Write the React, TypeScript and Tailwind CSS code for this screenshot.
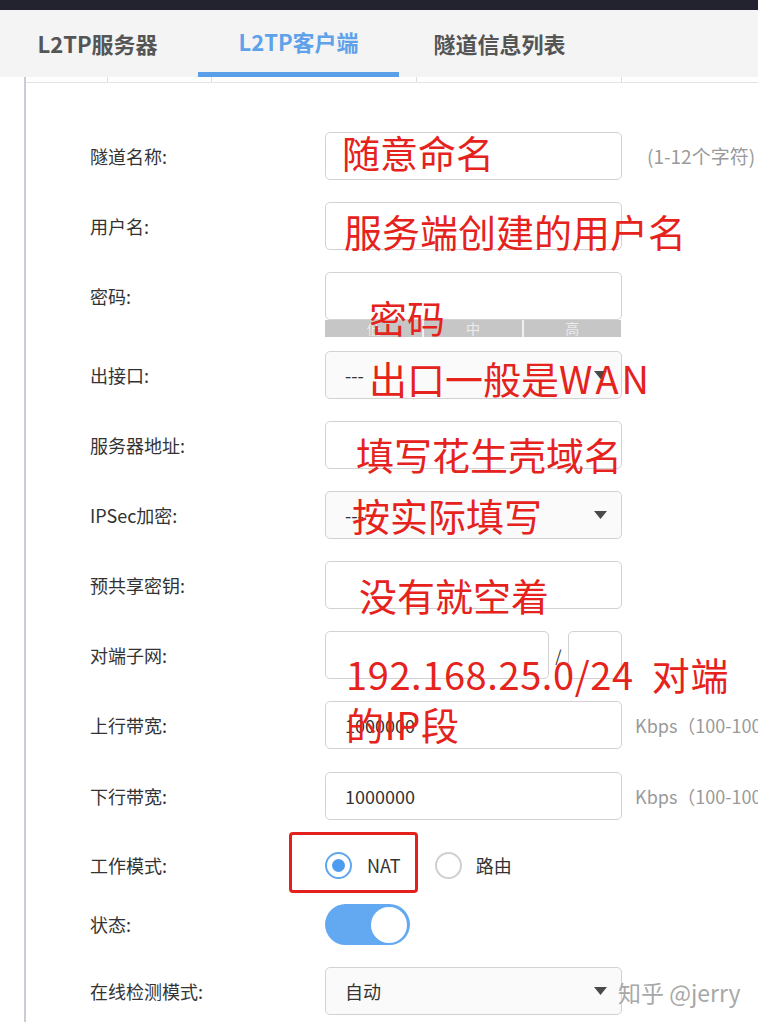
import React from 'react';

const font = { fontFamily: '"Noto Sans CJK SC", "Noto Sans", sans-serif' };

function Caret() {
  return (
    <svg width="13" height="8" viewBox="0 0 13 8" className="shrink-0">
      <path d="M0 0 L13 0 L6.5 8 Z" fill="#4a4a4a" />
    </svg>
  );
}

function TextBox({ value, width = 'w-[297px]' }: { value?: string; width?: string }) {
  return (
    <div className={`${width} h-[48px] border border-[#d2d2d2] rounded-[5px] bg-white flex items-center px-[19px] text-[18px] text-[#333]`}>
      {value}
    </div>
  );
}

function SelectBox({ value }: { value: string }) {
  return (
    <div className="w-[297px] h-[48px] border border-[#d2d2d2] rounded-[5px] bg-[#fafafa] flex items-center justify-between pl-[19px] pr-[14px] text-[18px] text-[#333]">
      <span>{value}</span>
      <Caret />
    </div>
  );
}

function Row({ label, className, children }: { label: string; className: string; children?: React.ReactNode }) {
  return (
    <div className={`flex items-center ${className}`}>
      <div className="w-[235px] shrink-0 text-[18px] text-[#333]">{label}</div>
      <div className="flex items-center">{children}</div>
    </div>
  );
}

function Hint({ children, className = 'ml-[13px]' }: { children: React.ReactNode; className?: string }) {
  return <span className={`${className} whitespace-nowrap text-[18px] text-[#9a9a9a]`}>{children}</span>;
}

export default function App() {
  return (
    <div className="relative w-[758px] h-[1022px] overflow-hidden bg-white" style={font}>
      {/* top strip */}
      <div className="h-[10px] bg-[#23232f]" />

      {/* tabs */}
      <div className="h-[67px] bg-[#f4f4f4] flex items-stretch -ml-[3px]">
        <div className="w-[201px] flex items-center justify-center text-[22px] font-bold text-[#555]">L2TP服务器</div>
        <div className="w-[201px] flex flex-col">
          <div className="flex-1 flex items-center justify-center text-[22px] font-bold text-[#5fa2ea]">L2TP客户端</div>
          <div className="h-[5px] bg-[#5b9fe8]" />
        </div>
        <div className="w-[201px] flex items-center justify-center text-[22px] font-bold text-[#555]">隧道信息列表</div>
      </div>

      {/* content */}
      <div className="ml-[24px] border-l-2 border-[#c9ced6] h-[945px]">
        <div className="flex h-[6px] border-b border-[#e4e4e4]">
          <div className="w-[81px]" />
          <div className="w-[104px] border-l border-[#dcdcdc]" />
          <div className="w-[205px] border-l border-[#dcdcdc]" />
          <div className="w-[205px] border-l border-[#dcdcdc]" />
          <div className="flex-1 border-l border-[#dcdcdc]" />
        </div>

        <div className="pl-[64px] pt-[38px] flex flex-col">
          <Row label="隧道名称:" className="h-[70px]">
            <TextBox />
            <span className="ml-[25px] whitespace-nowrap text-[19px] text-[#9a9a9a]">(1-12个字符)</span>
          </Row>
          <Row label="用户名:" className="h-[70px]">
            <TextBox />
          </Row>
          <div className="flex items-start h-[79px] pt-[11px]">
            <div className="w-[235px] shrink-0 h-[48px] flex items-center text-[18px] text-[#333]">密码:</div>
            <div className="flex flex-col">
              <TextBox />
              <div className="w-[296px] h-[17px] bg-[#c6c6c6] flex text-[14px] leading-[17px] text-[#ececec]">
                <div className="flex-1 text-center">低</div>
                <div className="flex-1 text-center border-l-2 border-[#f0f0f0]">中</div>
                <div className="flex-1 text-center border-l-2 border-[#f0f0f0]">高</div>
              </div>
            </div>
          </div>
          <Row label="出接口:" className="h-[70px]">
            <SelectBox value="---" />
          </Row>
          <Row label="服务器地址:" className="h-[70px]">
            <TextBox />
          </Row>
          <Row label="IPSec加密:" className="h-[70px]">
            <SelectBox value="---" />
          </Row>
          <Row label="预共享密钥:" className="h-[70px]">
            <TextBox />
          </Row>
          <Row label="对端子网:" className="h-[70px]">
            <TextBox width="w-[224px]" />
            <span className="w-[19px] text-center text-[16px] text-[#333]">/</span>
            <TextBox width="w-[54px]" />
          </Row>
          <Row label="上行带宽:" className="h-[70px]">
            <TextBox value="1000000" />
            <Hint>Kbps（100-1000000）</Hint>
          </Row>
          <Row label="下行带宽:" className="h-[72px]">
            <TextBox value="1000000" />
            <Hint>Kbps（100-1000000）</Hint>
          </Row>
          <Row label="工作模式:" className="h-[66px]">
            <div className="flex items-center text-[18px] text-[#333]">
              <span className="w-[27px] h-[27px] rounded-full border-2 border-[#5fa6f0] flex items-center justify-center">
                <span className="w-[13px] h-[13px] rounded-full bg-[#4e9cf0]" />
              </span>
              <span className="ml-[15px]">NAT</span>
              <span className="ml-[34px] w-[27px] h-[27px] rounded-full border-2 border-[#cfcfcf]" />
              <span className="ml-[14px]">路由</span>
            </div>
          </Row>
          <Row label="状态:" className="h-[53px]">
            <div className="w-[85px] h-[41px] rounded-full bg-[#63a9f2] flex items-center justify-end pr-[3px]">
              <div className="w-[36px] h-[36px] rounded-full bg-white" />
            </div>
          </Row>
          <Row label="在线检测模式:" className="h-[80px]">
            <SelectBox value="自动" />
          </Row>
        </div>
      </div>

      {/* annotations */}
      <div className="absolute left-[289px] top-[832px] w-[129px] h-[61px] border-[3px] border-[#e3201b] rounded-[4px]" />
      <div className="absolute left-[618px] top-[975px] text-[23px] text-[#a8a8a8] whitespace-nowrap [text-shadow:0_0_2px_#fff]">知乎 @jerry</div>

      <div className="absolute inset-0 text-[38px] leading-none text-[#e5221c] whitespace-nowrap pointer-events-none">
        <div className="absolute left-[342px] top-[133px]">随意命名</div>
        <div className="absolute left-[344px] top-[212px]">服务端创建的用户名</div>
        <div className="absolute left-[369px] top-[298px]">密码</div>
        <div className="absolute left-[369px] top-[359px]">
          出口一般是<span className="tracking-[3px]">WAN</span>
        </div>
        <div className="absolute left-[356px] top-[435px]">填写花生壳域名</div>
        <div className="absolute left-[352px] top-[496px]">按实际填写</div>
        <div className="absolute left-[359px] top-[576px]">没有就空着</div>
        <div className="absolute left-[346px] top-[649px] leading-[50px] tracking-[0.6px]">
          192.168.25.0/24&nbsp;&nbsp;对端
          <br />
          的IP段
        </div>
      </div>
    </div>
  );
}
